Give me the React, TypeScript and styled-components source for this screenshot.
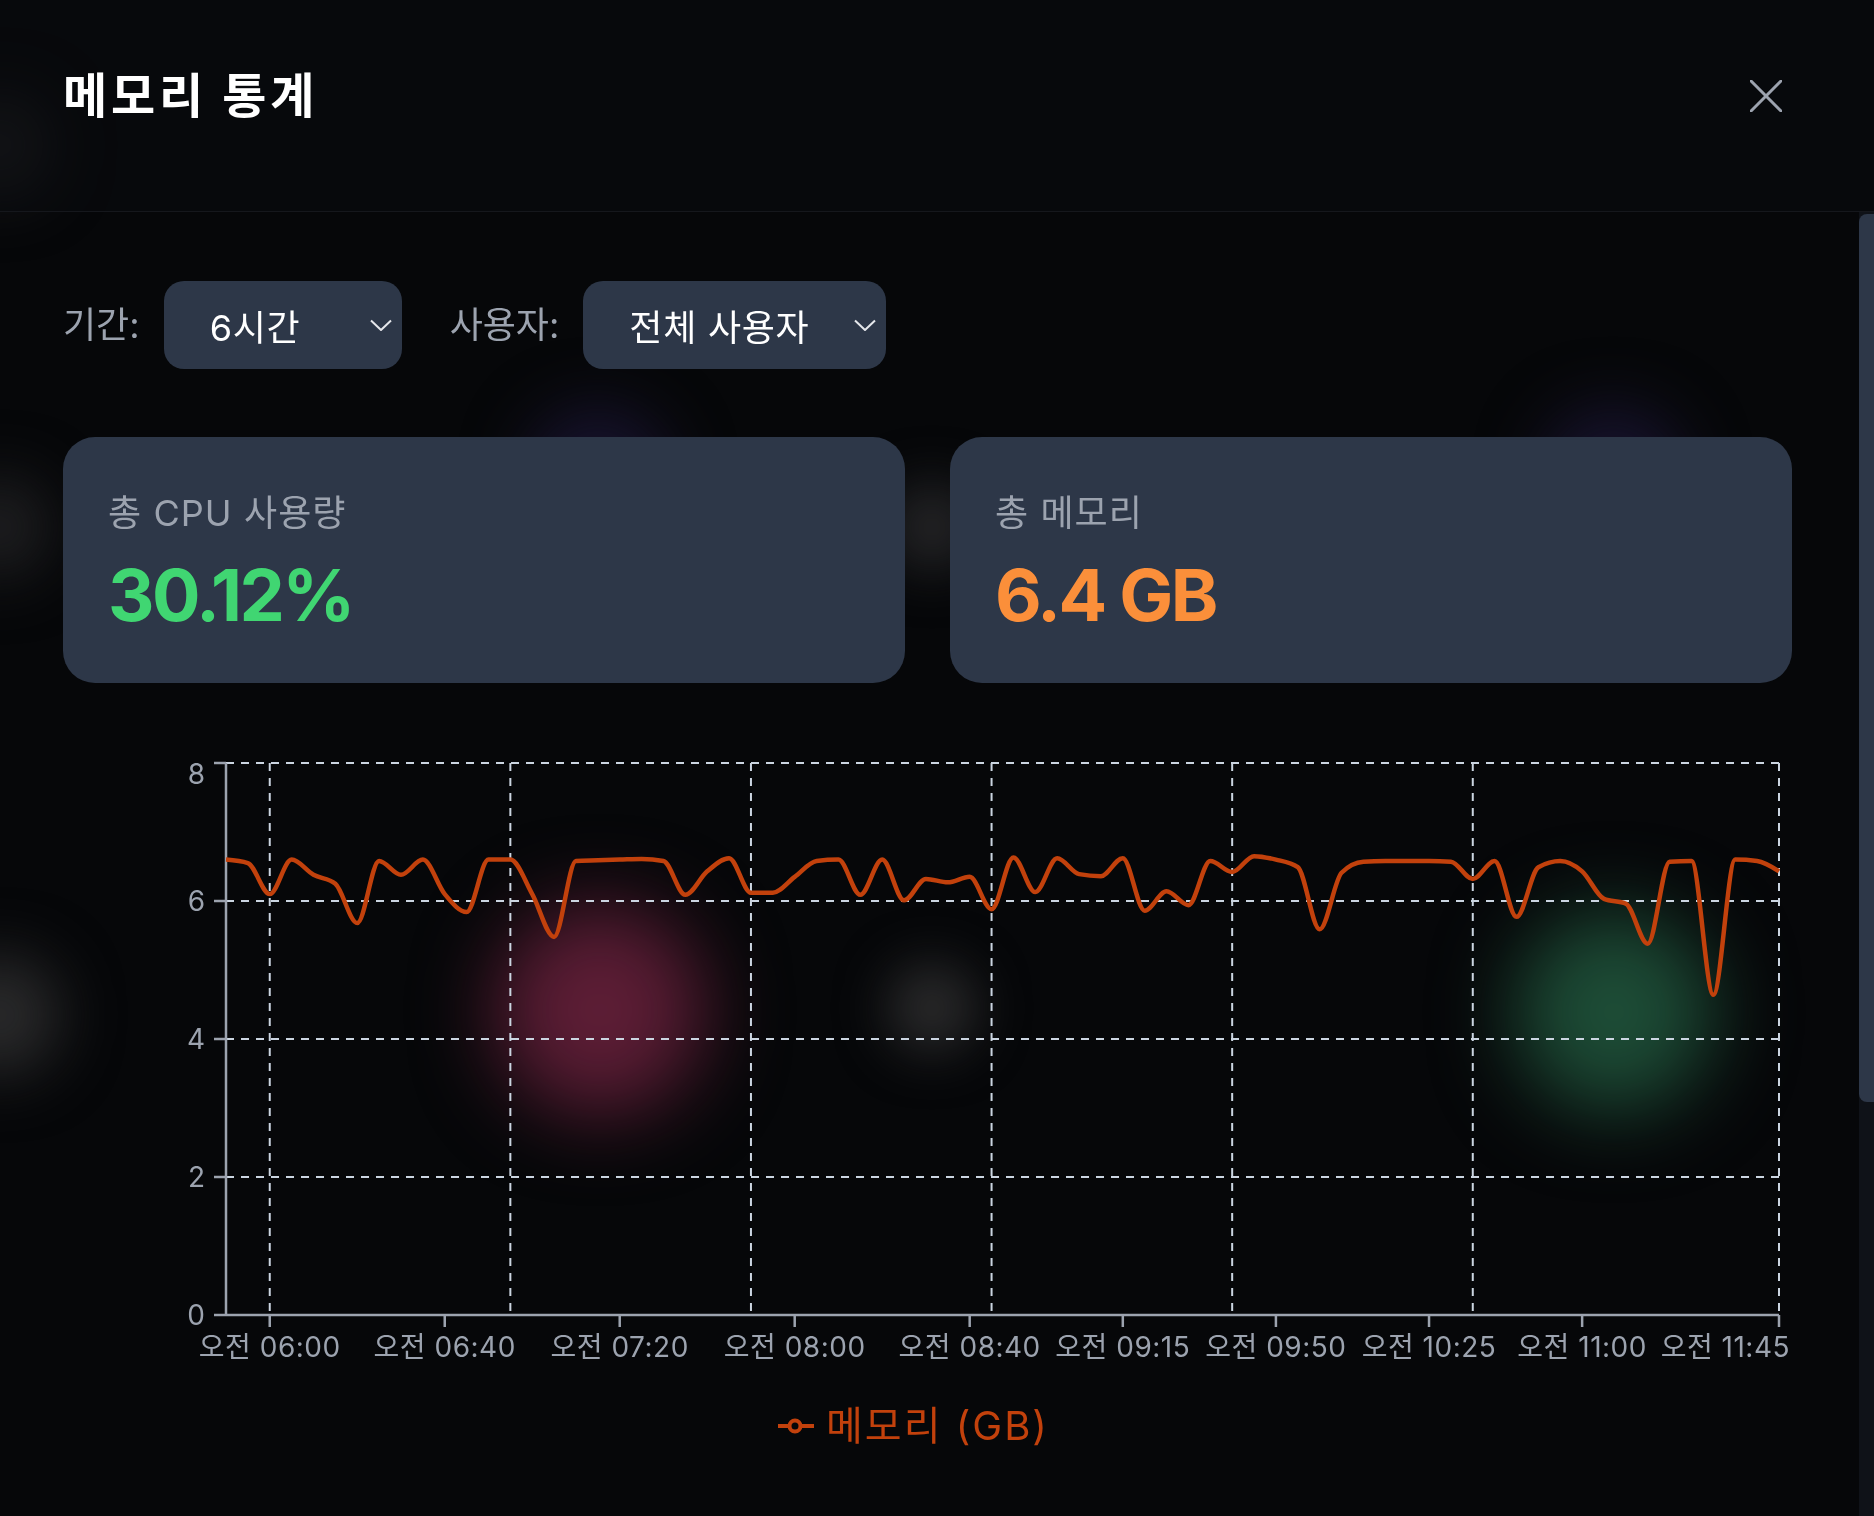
import styled, { createGlobalStyle } from 'styled-components';

const GlobalStyle = createGlobalStyle`
  * {
    box-sizing: border-box;
  }

  html,
  body {
    height: 100%;
    margin: 0;
    overflow: hidden;
    background: #060709;
  }

  body {
    font-family: Inter, 'Noto Sans CJK KR', sans-serif;
    color: #ffffff;
  }

  #root {
    height: 100%;
  }
`;

// memory usage samples, 5 minute steps starting at 05:50
const memory = [
  6.6, 6.55, 6.1, 6.6, 6.38, 6.25, 5.68, 6.58, 6.38, 6.6, 6.1, 5.84, 6.6, 6.6,
  6.1, 5.48, 6.58, 6.59, 6.6, 6.61, 6.58, 6.09, 6.43, 6.62, 6.12, 6.12, 6.35,
  6.58, 6.6, 6.09, 6.6, 6.01, 6.32, 6.27, 6.35, 5.88, 6.63, 6.13, 6.62, 6.39,
  6.36, 6.62, 5.86, 6.14, 5.94, 6.58, 6.42, 6.65, 6.6, 6.49, 5.59, 6.41, 6.57,
  6.58, 6.58, 6.58, 6.57, 6.32, 6.58, 5.77, 6.49, 6.58, 6.43, 6.03, 5.96, 5.38,
  6.57, 6.58, 4.64, 6.6, 6.58, 6.43,
];

const tickIndexes = [2, 10, 18, 26, 34, 41, 48, 55, 62, 71];
const gridIndexes = [2, 13, 24, 35, 46, 57, 71];
const yTicks = [0, 2, 4, 6, 8];

const CHART_W = 1729;
const CHART_H = 650;
const PLOT_L = 163;
const PLOT_R = 1716;
const PLOT_T = 33;
const PLOT_B = 585;

const xAt = (i: number) => PLOT_L + (i * (PLOT_R - PLOT_L)) / (memory.length - 1);
const yAt = (v: number) => PLOT_B - (v * (PLOT_B - PLOT_T)) / 8;

const timeLabel = (i: number) => {
  const minutes = 6 * 60 + (i - 2) * 5;
  const h = String(Math.floor(minutes / 60)).padStart(2, '0');
  const m = String(minutes % 60).padStart(2, '0');
  return `오전 ${h}:${m}`;
};

// same idea as d3 curveMonotoneX
const monotonePath = (pts: [number, number][]) => {
  const n = pts.length;
  const s: number[] = [];
  for (let i = 0; i < n - 1; i++) {
    s.push((pts[i + 1][1] - pts[i][1]) / (pts[i + 1][0] - pts[i][0]));
  }
  const m: number[] = new Array(n).fill(0);
  for (let i = 1; i < n - 1; i++) {
    const h0 = pts[i][0] - pts[i - 1][0];
    const h1 = pts[i + 1][0] - pts[i][0];
    const p = (s[i - 1] * h1 + s[i] * h0) / (h0 + h1);
    m[i] =
      (Math.sign(s[i - 1]) + Math.sign(s[i])) *
        Math.min(Math.abs(s[i - 1]), Math.abs(s[i]), 0.5 * Math.abs(p)) || 0;
  }
  m[0] = (3 * s[0] - m[1]) / 2;
  m[n - 1] = (3 * s[n - 2] - m[n - 2]) / 2;

  let d = `M${pts[0][0]},${pts[0][1]}`;
  for (let i = 0; i < n - 1; i++) {
    const [x0, y0] = pts[i];
    const [x1, y1] = pts[i + 1];
    const dx = (x1 - x0) / 3;
    d += `C${x0 + dx},${y0 + m[i] * dx},${x1 - dx},${y1 - m[i + 1] * dx},${x1},${y1}`;
  }
  return d;
};

const blobs = [
  { x: 0, y: 145, size: 100, color: '#1f1f21', blur: 30 },
  { x: 0, y: 527, size: 100, color: '#1f1f21', blur: 30 },
  { x: 0, y: 1015, size: 120, color: '#2a2a2b', blur: 30 },
  { x: 598, y: 480, size: 150, color: '#16122b', blur: 30 },
  { x: 1613, y: 480, size: 150, color: '#16122b', blur: 30 },
  { x: 932, y: 527, size: 90, color: '#232325', blur: 25 },
  { x: 932, y: 1008, size: 90, color: '#29292a', blur: 25 },
  { x: 600, y: 1010, size: 210, color: '#5c1d35', blur: 40 },
  { x: 1614, y: 1012, size: 200, color: '#1d4c36', blur: 40 },
];

const App = () => {
  const points = memory.map((v, i) => [xAt(i), yAt(v)] as [number, number]);

  return (
    <>
      <GlobalStyle />
      <Backdrop>
        {blobs.map((b, i) => (
          <Blob key={i} $x={b.x} $y={b.y} $size={b.size} $color={b.color} $blur={b.blur} />
        ))}
      </Backdrop>
      <Page>
        <Header>
          <Title>메모리 통계</Title>
          <CloseButton aria-label="닫기">
            <svg width="32" height="32" viewBox="0 0 32 32" fill="none">
              <path d="M1 1 31 31M31 1 1 31" stroke="#9ca3af" strokeWidth="3" strokeLinecap="round" />
            </svg>
          </CloseButton>
        </Header>
        <BodyFrame>
          <Scroller>
            <Content>
              <FilterRow>
                <FilterGroup>
                  <FilterLabel>기간:</FilterLabel>
                  <Select $width={238}>
                    6시간
                    <Chevron />
                  </Select>
                </FilterGroup>
                <FilterGroup>
                  <FilterLabel>사용자:</FilterLabel>
                  <Select $width={303}>
                    전체 사용자
                    <Chevron />
                  </Select>
                </FilterGroup>
              </FilterRow>

              <Cards>
                <StatCard>
                  <StatLabel>총 CPU 사용량</StatLabel>
                  <StatValue $color="#40d672">30.12%</StatValue>
                </StatCard>
                <StatCard>
                  <StatLabel>총 메모리</StatLabel>
                  <StatValue $color="#fb8f3a">6.4 GB</StatValue>
                </StatCard>
              </Cards>

              <ChartSection>
                <svg width={CHART_W} height={CHART_H} viewBox={`0 0 ${CHART_W} ${CHART_H}`}>
                  <g stroke="#cbd5e1" strokeWidth="2" strokeDasharray="8 7">
                    {yTicks
                      .filter((t) => t > 0)
                      .map((t) => (
                        <line key={t} x1={PLOT_L} x2={PLOT_R} y1={yAt(t)} y2={yAt(t)} />
                      ))}
                    {gridIndexes.map((i) => (
                      <line key={i} x1={xAt(i)} x2={xAt(i)} y1={PLOT_T} y2={PLOT_B} />
                    ))}
                  </g>

                  <g stroke="#9ca3af" strokeWidth="2.5">
                    <line x1={PLOT_L} x2={PLOT_L} y1={PLOT_T} y2={PLOT_B} />
                    <line x1={PLOT_L} x2={PLOT_R} y1={PLOT_B} y2={PLOT_B} />
                    {yTicks.map((t) => (
                      <line key={t} x1={PLOT_L - 12} x2={PLOT_L} y1={yAt(t)} y2={yAt(t)} />
                    ))}
                    {tickIndexes.map((i) => (
                      <line key={i} x1={xAt(i)} x2={xAt(i)} y1={PLOT_B} y2={PLOT_B + 12} />
                    ))}
                  </g>

                  <g fill="#9ca3af" fontSize="28" fontFamily="Inter, 'Noto Sans CJK KR', sans-serif">
                    {yTicks.map((t) => (
                      <text
                        key={t}
                        x={PLOT_L - 21}
                        y={t === 8 ? yAt(t) + 10.5 : yAt(t)}
                        textAnchor="end"
                        dominantBaseline="central"
                      >
                        {t}
                      </text>
                    ))}
                    {tickIndexes.map((i, k) => {
                      const last = k === tickIndexes.length - 1;
                      return (
                        <text
                          key={i}
                          x={last ? CHART_W - 2 : xAt(i)}
                          y={PLOT_B + 42}
                          textAnchor={last ? 'end' : 'middle'}
                          letterSpacing="0.5"
                        >
                          {timeLabel(i)}
                        </text>
                      );
                    })}
                  </g>

                  <path
                    d={monotonePath(points)}
                    fill="none"
                    stroke="#c2410c"
                    strokeWidth="4.5"
                    strokeLinejoin="round"
                  />
                </svg>

                <Legend>
                  <svg width="36" height="16" viewBox="0 0 36 16" fill="none">
                    <line x1="0" x2="36" y1="8" y2="8" stroke="#c2410c" strokeWidth="4" />
                    <circle cx="17" cy="8" r="5.5" fill="#060709" stroke="#c2410c" strokeWidth="4" />
                  </svg>
                  메모리 (GB)
                </Legend>
              </ChartSection>
            </Content>
          </Scroller>
          <ScrollTrack>
            <ScrollThumb />
          </ScrollTrack>
        </BodyFrame>
      </Page>
    </>
  );
};

const Chevron = () => (
  <svg width="22" height="13" viewBox="0 0 22 13" fill="none">
    <polyline points="1,1.5 11,11 21,1.5" stroke="#e5e7eb" strokeWidth="2" strokeLinejoin="round" />
  </svg>
);

const Backdrop = styled.div`
  position: fixed;
  inset: 0;
  z-index: 0;
  overflow: hidden;
  pointer-events: none;
`;

const Blob = styled.div<{ $x: number; $y: number; $size: number; $color: string; $blur: number }>`
  position: absolute;
  left: ${({ $x, $size }) => $x - $size / 2}px;
  top: ${({ $y, $size }) => $y - $size / 2}px;
  width: ${({ $size }) => $size}px;
  height: ${({ $size }) => $size}px;

  border-radius: 50%;
  background: ${({ $color }) => $color};
  filter: blur(${({ $blur }) => $blur}px);
`;

const Page = styled.div`
  position: relative;
  z-index: 1;
  display: flex;
  flex-direction: column;

  height: 100%;
`;

const Header = styled.header`
  display: flex;
  justify-content: space-between;
  align-items: center;
  flex-shrink: 0;

  height: 212px;
  padding: 64px 84px 84px 63px;

  border-bottom: 1px solid #15171c;
  background: rgba(10, 11, 14, 0.55);
`;

const Title = styled.h1`
  margin: 0;

  font-size: 48px;
  font-weight: 700;
  line-height: 64px;
  letter-spacing: 0.08em;
  color: #ffffff;
`;

const CloseButton = styled.button`
  display: flex;
  justify-content: center;
  align-items: center;

  width: 48px;
  height: 48px;
  padding: 0;

  border: none;
  background: transparent;
  cursor: pointer;
`;

const BodyFrame = styled.div`
  display: flex;
  flex: 1;
  min-height: 0;
`;

const Scroller = styled.main`
  flex: 1;
  overflow-y: auto;
  scrollbar-width: none;

  &::-webkit-scrollbar {
    display: none;
  }
`;

const ScrollTrack = styled.div`
  flex-shrink: 0;

  width: 15px;
  padding-top: 2px;

  background: #0f1218;
`;

const ScrollThumb = styled.div`
  height: 888px;

  border-radius: 8px 0 0 8px;
  background: #2d3748;
`;

const Content = styled.div`
  min-height: 1915px;
  padding: 69px 67px 0 63px;
`;

const FilterRow = styled.div`
  display: flex;
  align-items: center;
  gap: 48px;
`;

const FilterGroup = styled.div`
  display: flex;
  align-items: center;
  gap: 24px;
`;

const FilterLabel = styled.span`
  font-size: 36px;
  line-height: 54px;
  color: #9ca3af;
`;

const Select = styled.div<{ $width: number }>`
  display: flex;
  justify-content: space-between;
  align-items: center;

  width: ${({ $width }) => $width}px;
  height: 88px;
  padding: 0 10px 0 46px;

  border-radius: 20px;
  background-color: #2d3748;
  font-size: 36px;
  letter-spacing: 0.02em;
  color: #ffffff;
`;

const Cards = styled.div`
  display: grid;
  grid-template-columns: 1fr 1fr;
  gap: 45px;

  margin-top: 68px;
`;

const StatCard = styled.div`
  padding: 48px 45px;

  border-radius: 32px;
  background-color: #2d3748;
`;

const StatLabel = styled.p`
  margin: 0;

  font-size: 36px;
  line-height: 56px;
  letter-spacing: 0.03em;
  color: #9ca3af;
`;

const StatValue = styled.p<{ $color: string }>`
  margin: 14px 0 0;

  font-size: 72px;
  font-weight: 700;
  line-height: 80px;
  letter-spacing: -0.035em;
  color: ${({ $color }) => $color};
`;

const ChartSection = styled.section`
  margin-top: 47px;

  svg {
    display: block;
  }
`;

const Legend = styled.div`
  display: flex;
  justify-content: center;
  align-items: center;
  gap: 12px;

  margin-top: 19px;
  padding-right: 28px;

  font-size: 40px;
  line-height: 54px;
  letter-spacing: 0.05em;
  color: #c2410c;
`;

export default App;
